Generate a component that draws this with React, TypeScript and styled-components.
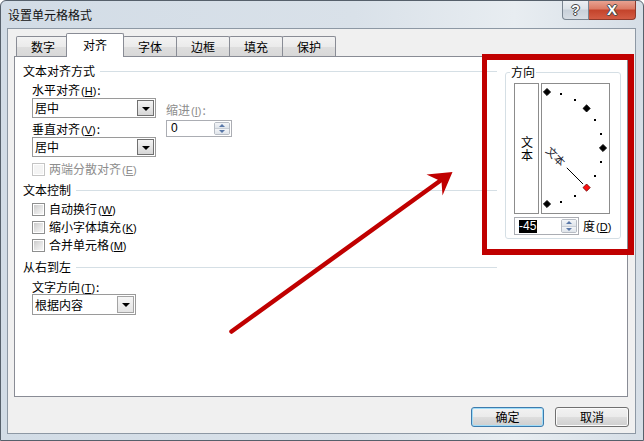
import React from "react";
import styled, { createGlobalStyle } from "styled-components";

const Global = createGlobalStyle`
  html, body { margin: 0; padding: 0; background: #fff; }
  body {
    width: 644px; height: 441px; overflow: hidden;
    font-family: "Noto Sans CJK SC", "Liberation Sans", sans-serif;
    font-size: 12px; color: #000;
  }
  * { box-sizing: border-box; }
`;

const Window = styled.div`
  position: relative;
  width: 644px;
  height: 441px;
  border: 1px solid #56606b;
  border-radius: 6px 6px 0 0;
  background: linear-gradient(to right, #d2dce6 0%, #d9e1e9 55%, #e8edf1 80%, #dde4eb 92%, #d6dee6 100%);
  padding: 0 7px 6px 6px;
  display: flex;
  flex-direction: column;
  overflow: hidden;
`;

const TitleBar = styled.div`
  height: 27px;
  display: flex;
  align-items: flex-start;
  justify-content: space-between;
`;

const Title = styled.div`
  margin-top: 7px;
  padding-left: 1px;
  font-size: 12px;
  line-height: 14px;
  color: #111;
`;

const Caption = styled.div`
  display: flex;
  margin-top: -1px;
`;

const CapBtn = styled.div<{ $close?: boolean }>`
  width: ${(p) => (p.$close ? 47 : 27)}px;
  height: 20px;
  border: 1px solid ${(p) => (p.$close ? "#8e3a2c" : "#7a8591")};
  border-top: none;
  ${(p) => (p.$close ? "border-left: none;" : "")}
  border-radius: ${(p) => (p.$close ? "0 0 4px 0" : "0 0 0 4px")};
  background: ${(p) =>
    p.$close
      ? "linear-gradient(#e9a797 0%, #dc7c66 45%, #c4442c 55%, #d35c44 100%)"
      : "linear-gradient(#eef1f4 0%, #dde3e9 45%, #c9d1da 55%, #d7dde4 100%)"};
  display: flex;
  align-items: center;
  justify-content: center;
  font-family: "Liberation Sans", sans-serif;
  font-weight: bold;
  font-size: ${(p) => (p.$close ? 15 : 14)}px;
  color: #fff;
  text-shadow: 0 0 1px #333, 0 0 1px #333, 1px 0 0 #555, -1px 0 0 #555, 0 1px 0 #555, 0 -1px 0 #555;
`;

const Client = styled.div`
  height: 406px;
  border: 1px solid #8d98a4;
  background: #f0f0f0;
  padding: 4px 7px 0 6px;
  display: flex;
  flex-direction: column;
`;

const TabStrip = styled.div`
  position: relative;
  z-index: 2;
  height: 24px;
  display: flex;
  align-items: flex-end;
  padding-left: 2px;
`;

const Tab = styled.div<{ $active?: boolean }>`
  width: ${(p) => (p.$active ? 58 : 54)}px;
  height: ${(p) => (p.$active ? 24 : 20)}px;
  margin: 0 -1px ${(p) => (p.$active ? 0 : 1)}px ${(p) => (p.$active ? -3 : 0)}px;
  border: 1px solid #898c95;
  border-bottom: none;
  border-radius: 2px 2px 0 0;
  background: ${(p) => (p.$active ? "#fff" : "linear-gradient(#f3f3f3 0%, #ebebeb 50%, #dedede 51%, #d8d8d8 100%)")};
  position: relative;
  z-index: ${(p) => (p.$active ? 2 : 1)};
  display: flex;
  align-items: center;
  justify-content: center;
  padding-bottom: ${(p) => (p.$active ? 2 : 0)}px;
  line-height: 14px;
`;

const Panel = styled.div`
  margin-top: -1px;
  height: 341px;
  border: 1px solid #898c95;
  background: #fff;
  display: flex;
  padding: 6px 0 0 8px;
`;

const LeftCol = styled.div`
  width: 474px;
  display: flex;
  flex-direction: column;
`;

const RightCol = styled.div`
  width: 116px;
  margin-left: 8px;
  display: flex;
  flex-direction: column;
`;

const SectionHeader = styled.div<{ $mt?: number }>`
  height: 16px;
  margin-top: ${(p) => p.$mt ?? 0}px;
  display: flex;
  align-items: center;
  line-height: 16px;
`;

const HeaderLine = styled.div`
  flex: 1;
  height: 1px;
  margin-left: 5px;
  background: #d5dfe5;
`;

const Indented = styled.div<{ $mt?: number }>`
  padding-left: 9px;
  margin-top: ${(p) => p.$mt ?? 0}px;
  display: flex;
`;

const SubCol = styled.div<{ $w?: number; $ml?: number }>`
  display: flex;
  flex-direction: column;
  ${(p) => (p.$w ? `width: ${p.$w}px;` : "")}
  margin-left: ${(p) => p.$ml ?? 0}px;
`;

const Label = styled.div<{ $mt?: number; $pt?: number; $lh?: number; $disabled?: boolean }>`
  margin-top: ${(p) => p.$mt ?? 0}px;
  padding-top: ${(p) => p.$pt ?? 0}px;
  height: ${(p) => (p.$lh ?? 14) + (p.$pt ?? 0)}px;
  line-height: ${(p) => p.$lh ?? 14}px;
  color: ${(p) => (p.$disabled ? "#8d8d8d" : "#000")};
  white-space: nowrap;
  overflow: visible;
`;

const Mnemonic = styled.span`
  font-family: "Liberation Sans", sans-serif;
  font-size: 11px;
  line-height: 1;
  margin: 0 1px;
`;

const SelectBox = styled.div<{ $w: number; $h: number; $mt?: number }>`
  width: ${(p) => p.$w}px;
  height: ${(p) => p.$h}px;
  margin-top: ${(p) => p.$mt ?? 0}px;
  border: 1px solid #9a9a9a;
  background: #fff;
  display: flex;
  align-items: center;
  padding: 1px 1px 1px 2px;
`;

const SelectText = styled.div`
  flex: 1;
  line-height: 14px;
`;

const ArrowBtn = styled.div<{ $light?: boolean }>`
  width: 17px;
  height: 100%;
  border: 1px solid ${(p) => (p.$light ? "#a3a3a3" : "#707070")};
  background: ${(p) => (p.$light ? "linear-gradient(#f6f6f6, #e4e4e4)" : "linear-gradient(#f4f4f4 0%, #e6e6e6 50%, #d6d6d6 100%)")};
  display: flex;
  align-items: center;
  justify-content: center;
  &::after {
    content: "";
    border-left: 4px solid transparent;
    border-right: 4px solid transparent;
    border-top: 4px solid #000;
    margin-top: 1px;
  }
`;

const SpinBox = styled.div<{ $w: number; $h: number; $mt?: number }>`
  width: ${(p) => p.$w}px;
  height: ${(p) => p.$h}px;
  margin-top: ${(p) => p.$mt ?? 0}px;
  border: 1px solid #abadb3;
  background: #fff;
  display: flex;
  align-items: center;
  padding: 1px;
`;

const SpinValue = styled.div<{ $selected?: boolean }>`
  flex: 1;
  display: flex;
  padding-left: 3px;
  font-family: "Liberation Sans", sans-serif;
  font-size: 12px;
  line-height: 13px;
  span {
    background: ${(p) => (p.$selected ? "#000" : "transparent")};
    color: ${(p) => (p.$selected ? "#fff" : "#000")};
    padding: 0 1px 0 0;
  }
`;

const SpinBtns = styled.div`
  width: 16px;
  height: 100%;
  display: flex;
  flex-direction: column;
  border: 1px solid #b7bcc4;
  border-radius: 2px;
  overflow: hidden;
`;

const SpinHalf = styled.div<{ $down?: boolean }>`
  flex: 1;
  background: linear-gradient(#f3f5f8, #dfe4ea);
  display: flex;
  align-items: center;
  justify-content: center;
  ${(p) => (p.$down ? "border-top: 1px solid #c8ced6;" : "")}
  &::after {
    content: "";
    border-left: 3px solid transparent;
    border-right: 3px solid transparent;
    ${(p) => (p.$down ? "border-top: 3px solid #5a78a8;" : "border-bottom: 3px solid #5a78a8;")}
  }
`;

const CheckRow = styled.div<{ $mt?: number; $disabled?: boolean }>`
  padding-left: 9px;
  margin-top: ${(p) => p.$mt ?? 0}px;
  height: 14px;
  display: flex;
  align-items: center;
  gap: 4px;
  line-height: 14px;
  color: ${(p) => (p.$disabled ? "#8d8d8d" : "#000")};
  span { line-height: 14px; }
`;

const CheckBox = styled.div<{ $disabled?: boolean }>`
  width: 13px;
  height: 13px;
  border: 1px solid ${(p) => (p.$disabled ? "#c5c5c5" : "#8e8f8f")};
  background: #fff;
  padding: 1px;
  &::after {
    content: "";
    display: block;
    width: 100%;
    height: 100%;
    background: ${(p) => (p.$disabled ? "#f4f4f4" : "linear-gradient(135deg, #cbcbcb 0%, #e3e3e3 50%, #f6f6f6 100%)")};
  }
`;

const OrientGroup = styled.div`
  margin-top: 9px;
  height: 167px;
  border: 1px solid #d5dfe5;
  border-radius: 3px;
  padding-left: 8px;
  display: flex;
  flex-direction: column;
`;

const Legend = styled.div`
  align-self: flex-start;
  margin: -8px 0 0 -4px;
  padding: 0 1px;
  background: #fff;
  line-height: 14px;
`;

const DialRow = styled.div`
  margin-top: 4px;
  height: 131px;
  display: flex;
  gap: 2px;
`;

const VertTextBox = styled.div`
  width: 25px;
  border: 1px solid #8c8c8c;
  display: flex;
  align-items: center;
  justify-content: center;
  font-size: 12px;
`;

const VertText = styled.span`
  writing-mode: vertical-rl;
  text-orientation: upright;
  line-height: 14px;
  letter-spacing: 1px;
`;

const DialBox = styled.div`
  width: 69px;
  border: 1px solid #8c8c8c;
  svg { display: block; }
`;

const DegreeRow = styled.div`
  margin-top: 3px;
  display: flex;
  align-items: center;
  gap: 4px;
  line-height: 14px;
`;

const ButtonRow = styled.div`
  margin-top: 10px;
  margin-right: -1px;
  display: flex;
  justify-content: flex-end;
  gap: 11px;
`;

const Button = styled.div<{ $default?: boolean }>`
  width: ${(p) => (p.$default ? 73 : 74)}px;
  height: 20px;
  border: 1px solid ${(p) => (p.$default ? "#3d7bad" : "#707070")};
  border-radius: 3px;
  background: linear-gradient(#f2f2f2 0%, #ebebeb 48%, #dddddd 52%, #cfcfcf 100%);
  box-shadow: ${(p) => (p.$default ? "inset 0 0 0 1px #9fdcf8" : "inset 0 0 0 1px #fbfbfb")};
  display: flex;
  align-items: center;
  justify-content: center;
  line-height: 14px;
`;

const Annotation = styled.div`
  position: absolute;
  left: 481px;
  top: 53px;
  width: 152px;
  height: 201px;
  border: 6px solid #c00000;
  border-left-width: 5px;
  pointer-events: none;
`;

const ArrowLayer = styled.svg`
  position: absolute;
  left: -1px;
  top: -1px;
  pointer-events: none;
`;

const Mn = ({ k }: { k: string }) => (
  <Mnemonic>
    (<u>{k}</u>)
  </Mnemonic>
);

function Dial() {
  const cx = 5;
  const cy = 64;
  const r = 56;
  const marks: React.ReactNode[] = [];
  for (let a = 90; a >= -90; a -= 15) {
    const rad = (a * Math.PI) / 180;
    const x = cx + r * Math.cos(rad);
    const y = cy - r * Math.sin(rad);
    if (a % 45 === 0) {
      const s = 3.6;
      marks.push(
        <polygon
          key={a}
          points={`${x},${y - s} ${x + s},${y} ${x},${y + s} ${x - s},${y}`}
          fill={a === -45 ? "#ff1010" : "#000"}
          stroke={a === -45 ? "#600" : "#000"}
          strokeWidth={0.8}
        />
      );
    } else {
      marks.push(<rect key={a} x={Math.round(x) - 1} y={Math.round(y) - 1} width={2} height={2} fill="#000" />);
    }
  }
  const c45 = Math.SQRT1_2;
  return (
    <svg width="67" height="129" viewBox="0 0 67 129">
      {marks}
      <line x1={cx + 28 * c45} y1={cy + 28 * c45} x2={cx + 51 * c45} y2={cy + 51 * c45} stroke="#000" strokeWidth="1" />
      <text
        x={cx + 1}
        y={cy + 4}
        transform={`rotate(45 ${cx} ${cy})`}
        fontSize="11"
        fontFamily='"Noto Sans CJK SC", sans-serif'
        fill="#1a1a2e"
      >
        文本
      </text>
    </svg>
  );
}

export default function App() {
  return (
    <>
      <Global />
      <Window>
        <TitleBar>
          <Title>设置单元格格式</Title>
          <Caption>
            <CapBtn>?</CapBtn>
            <CapBtn $close>X</CapBtn>
          </Caption>
        </TitleBar>
        <Client>
          <TabStrip>
            <Tab>数字</Tab>
            <Tab $active>对齐</Tab>
            <Tab>字体</Tab>
            <Tab>边框</Tab>
            <Tab>填充</Tab>
            <Tab>保护</Tab>
          </TabStrip>
          <Panel>
            <LeftCol>
              <SectionHeader>
                文本对齐方式
                <HeaderLine />
              </SectionHeader>
              <Indented>
                <SubCol $w={124}>
                  <Label $mt={4}>
                    水平对齐<Mn k="H" />:
                  </Label>
                  <SelectBox $w={124} $h={20} $mt={1}>
                    <SelectText>居中</SelectText>
                    <ArrowBtn />
                  </SelectBox>
                  <Label $pt={3} $lh={16}>
                    垂直对齐<Mn k="V" />:
                  </Label>
                  <SelectBox $w={124} $h={20}>
                    <SelectText>居中</SelectText>
                    <ArrowBtn />
                  </SelectBox>
                </SubCol>
                <SubCol $ml={10}>
                  <Label $mt={24} $disabled>
                    缩进<Mn k="I" />:
                  </Label>
                  <SpinBox $w={66} $h={17} $mt={3}>
                    <SpinValue>
                      <span>0</span>
                    </SpinValue>
                    <SpinBtns>
                      <SpinHalf />
                      <SpinHalf $down />
                    </SpinBtns>
                  </SpinBox>
                </SubCol>
              </Indented>
              <CheckRow $mt={5} $disabled>
                <CheckBox $disabled />
                <span>
                  两端分散对齐<Mn k="E" />
                </span>
              </CheckRow>
              <SectionHeader $mt={6}>
                文本控制
                <HeaderLine />
              </SectionHeader>
              <CheckRow $mt={4}>
                <CheckBox />
                <span>
                  自动换行<Mn k="W" />
                </span>
              </CheckRow>
              <CheckRow $mt={4}>
                <CheckBox />
                <span>
                  缩小字体填充<Mn k="K" />
                </span>
              </CheckRow>
              <CheckRow $mt={4}>
                <CheckBox />
                <span>
                  合并单元格<Mn k="M" />
                </span>
              </CheckRow>
              <SectionHeader $mt={7}>
                从右到左
                <HeaderLine />
              </SectionHeader>
              <Indented $mt={5}>
                <SubCol>
                  <Label>
                    文字方向<Mn k="T" />:
                  </Label>
                  <SelectBox $w={104} $h={21}>
                    <SelectText>根据内容</SelectText>
                    <ArrowBtn $light />
                  </SelectBox>
                </SubCol>
              </Indented>
            </LeftCol>
            <RightCol>
              <OrientGroup>
                <Legend>方向</Legend>
                <DialRow>
                  <VertTextBox>
                    <VertText>文本</VertText>
                  </VertTextBox>
                  <DialBox>
                    <Dial />
                  </DialBox>
                </DialRow>
                <DegreeRow>
                  <SpinBox $w={65} $h={18}>
                    <SpinValue $selected>
                      <span>-45</span>
                    </SpinValue>
                    <SpinBtns>
                      <SpinHalf />
                      <SpinHalf $down />
                    </SpinBtns>
                  </SpinBox>
                  <span>
                    度<Mn k="D" />
                  </span>
                </DegreeRow>
              </OrientGroup>
            </RightCol>
          </Panel>
          <ButtonRow>
            <Button $default>确定</Button>
            <Button>取消</Button>
          </ButtonRow>
        </Client>
        <Annotation />
        <ArrowLayer width="644" height="441" viewBox="0 0 644 441">
          <line x1="231.5" y1="331.5" x2="444" y2="178" stroke="#c00000" strokeWidth="4.5" strokeLinecap="round" />
          <polygon points="452.5,172 426.5,174.5 441.5,181.5 442.5,195.5" fill="#c00000" />
        </ArrowLayer>
      </Window>
    </>
  );
}
